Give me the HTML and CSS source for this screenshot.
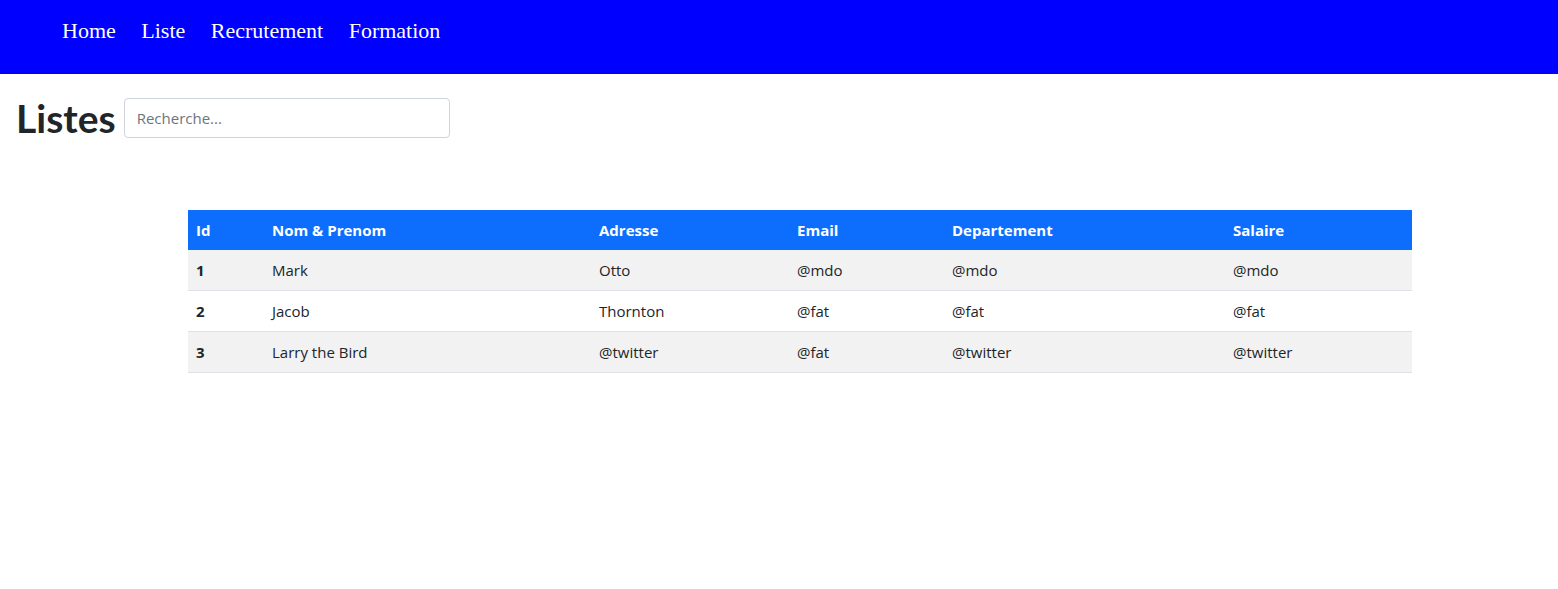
FILE: index.html
```html
<!DOCTYPE html>
<html lang="fr">
<head>
<meta charset="utf-8">
<title>Listes</title>
<link rel="stylesheet" href="styles.css">
</head>
<body>
<nav class="navbar">
  <a class="nav-link" href="#">Home</a>
  <a class="nav-link" href="#">Liste</a>
  <a class="nav-link" href="#">Recrutement</a>
  <a class="nav-link" href="#">Formation</a>
</nav>
<div class="title-row">
  <h1 class="title">Listes</h1>
  <input class="search" type="text" placeholder="Recherche...">
</div>
<div class="table-wrap">
  <table class="data-table">
    <thead>
      <tr>
        <th class="c-id">Id</th>
        <th class="c-nom">Nom &amp; Prenom</th>
        <th class="c-adr">Adresse</th>
        <th class="c-mail">Email</th>
        <th class="c-dep">Departement</th>
        <th class="c-sal">Salaire</th>
      </tr>
    </thead>
    <tbody>
      <tr class="odd">
        <th>1</th><td>Mark</td><td>Otto</td><td>@mdo</td><td>@mdo</td><td>@mdo</td>
      </tr>
      <tr>
        <th>2</th><td>Jacob</td><td>Thornton</td><td>@fat</td><td>@fat</td><td>@fat</td>
      </tr>
      <tr class="odd">
        <th>3</th><td>Larry the Bird</td><td>@twitter</td><td>@fat</td><td>@twitter</td><td>@twitter</td>
      </tr>
    </tbody>
  </table>
</div>
</body>
</html>
```
FILE: styles.css
```css
* { box-sizing: border-box; }
body {
  margin: 0;
  font-family: "Open Sans", "Noto Sans", sans-serif;
  font-size: 16px;
  color: #212529;
  background: #fff;
}
.navbar {
  background: #0000ff;
  height: 74px;
  display: flex;
  align-items: flex-start;
  gap: 25.5px;
  padding: 17px 0 0 62px;
}
.nav-link {
  font-family: "Liberation Serif", "Times New Roman", serif;
  font-size: 22px;
  line-height: 28px;
  color: #fff;
  text-decoration: none;
}
.title-row {
  display: flex;
  align-items: center;
  gap: 8px;
  padding: 24px 0 0 16px;
}
.title {
  margin: 0;
  font-family: "Lato", "Open Sans", sans-serif;
  font-size: 39px;
  font-weight: 700;
  line-height: 40px;
  color: #212529;
}
.search {
  width: 326px;
  height: 40px;
  border: 1px solid #ced4da;
  border-radius: 4px;
  padding: 6px 12px;
  font-family: inherit;
  font-size: 15px;
  color: #212529;
}
.search::placeholder { color: #6c757d; }
.table-wrap {
  padding: 72px 0 0 188px;
}
.data-table {
  width: 1224px;
  border-collapse: separate;
  border-spacing: 0;
  table-layout: fixed;
  font-size: 15px;
}
.data-table th,
.data-table td {
  text-align: left;
  padding: 8px;
  line-height: 24px;
  border-bottom: 1px solid #dee2e6;
}
.data-table thead th {
  background: #0d6efd;
  color: #fff;
  font-weight: 700;
  border-bottom: 0;
}
.data-table tbody th { font-weight: 700; }
.data-table tr.odd th,
.data-table tr.odd td { background: #f2f2f2; }
.c-id { width: 76px; }
.c-nom { width: 327px; }
.c-adr { width: 198px; }
.c-mail { width: 155px; }
.c-dep { width: 281px; }
.c-sal { width: 187px; }
```
